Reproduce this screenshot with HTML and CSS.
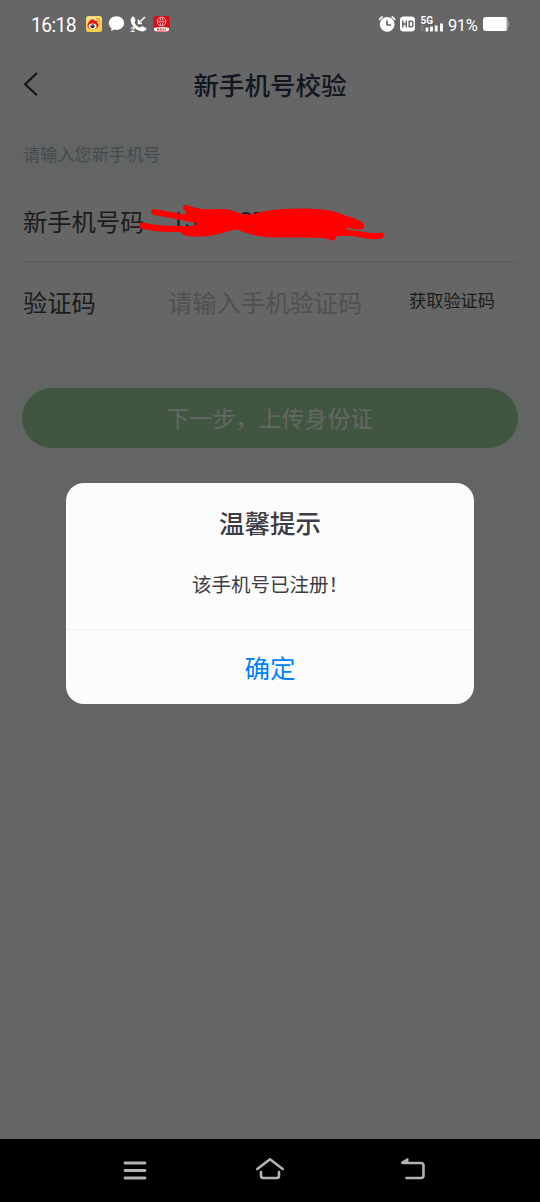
FILE: index.html
```html
<!DOCTYPE html>
<html lang="zh-CN">
<head>
<meta charset="utf-8">
<title>新手机号校验</title>
<link rel="stylesheet" href="styles.css">
</head>
<body>
<div class="screen">
  <div class="status">
    <span class="clock">16:18</span>
    <svg class="notices" width="86" height="20" viewBox="85 14 86 20">
      <rect x="86" y="16" width="16" height="16" rx="2.5" fill="#f8cf48"/>
      <rect x="86.500" y="16.500" width="15" height="7" rx="2" fill="#fbe08a"/>
      <path d="M87.500 26c0-4 4-7.500 6-6.500 1 0 1 1 .7 1.600 2-.7 3.600 0 2.900 1.800 1.700.4 2 2.500.8 4.100-2.300 3.200-10.400 3-10.400-1z" fill="#e51c12"/>
      <ellipse cx="92.600" cy="26.200" rx="3.900" ry="2.800" fill="#fff"/>
      <circle cx="92.500" cy="26.200" r="2" fill="#222"/>
      <circle cx="92" cy="25.600" r=".6" fill="#fff"/>
      <path d="M96 18.500q4-.5 4 4M96.500 20.500q1.700 0 1.800 1.800" fill="none" stroke="#f49a16" stroke-width="1.200"/>
      <path d="M116.500 16.300c4.300 0 7.600 2.900 7.600 6.800s-3.300 6.800-7.600 6.800c-.7 0-1.600-.1-2.200-.3l-3 1.500.1-2.800c-1.600-1.300-2.500-3.100-2.500-5.200 0-3.900 3.300-6.800 7.600-6.800z" fill="#fff"/>
      <path d="M132.300 16.800c1-.7 1.700-.4 2.100.6l1.100 2.600c.3.900-.7 1.500-1.100 2.300.8 2.500 2.900 4.400 5.400 5.200.9-.5 1.600-1.600 2.500-1.200l3.400 1.500c.9.500 1 1.200.3 1.900-1.500 1.800-3.600 2.100-6 1.300-4.700-1.500-8.400-5.500-9.200-10-.2-1.900.3-3.300 1.500-4.200z" fill="#fff"/>
      <path d="M138.300 23.500l6.700-6.500M138.500 19.500v4h3.500" fill="none" stroke="#fff" stroke-width="1.500"/>
      <text x="130.500" y="31.500" class="sim">2</text>
      <rect x="153.500" y="16" width="16" height="16" rx="3" fill="#d60c18"/>
      <path d="M154 28q3.500-1 7.500-1t7.500 1v1.500q0 2-2.500 2h-10q-2.500 0-2.500-2z" fill="#fff"/>
      <circle cx="161.500" cy="21.500" r="4.300" fill="none" stroke="#fbb" stroke-width="1"/>
      <path d="M160.500 18v2.200l-2 1.300 2 1.500v2.200M162.500 18v2.200l2 1.300-2 1.500v2.200M160.300 21.500h2.400" fill="none" stroke="#fbb" stroke-width=".8"/>
      <path d="M157 29.500h9" stroke="#e64650" stroke-width="2" stroke-dasharray="2 .7"/>
    </svg>
    <svg class="signals" width="68" height="20" viewBox="378 14 68 20">
      <circle cx="387.200" cy="24.300" r="7.400" fill="#fff"/>
      <path d="M379.300 20q1-2.200 3.400-3.500M395 20q-1-2.200-3.400-3.500" fill="none" stroke="#fff" stroke-width="1.600"/>
      <path d="M387 20.500v4.500h4" fill="none" stroke="#666" stroke-width="1.700"/>
      <rect x="400" y="16.500" width="15" height="15" rx="3.500" fill="#fff"/>
      <path d="M402.800 20.500v7M406.300 20.500v7M402.800 24h3.500M409.200 21.200h1.700q2 0 2 2v1.600q0 2-2 2h-1.700z" fill="none" stroke="#666" stroke-width="1.500"/>
      <text x="420.500" y="24" class="network">5G</text>
      <path d="M420.500 27.300l1.800-2.300 1.800 2.300zM420.500 28.700l1.800 2.300 1.800-2.300z" fill="#8c8c8c"/>
      <path d="M427 27.500v4M431.500 26.500v5M436.200 25.500v6M441.500 23.500v8" stroke="#fff" stroke-width="2.800"/>
    </svg>
    <span class="percent">91%</span>
    <svg width="28" height="14" viewBox="483 18 28 14">
      <path d="M507 21.500q2.500.5 2.500 3.500t-2.500 3.500z" fill="#999"/>
      <rect x="483" y="18" width="25" height="14" rx="3" fill="#999"/>
      <path d="M486 18h20.500v14H486q-3 0-3-3v-8q0-3 3-3z" fill="#fff"/>
    </svg>
  </div>

  <div class="header">
    <svg class="back" width="18" height="26" viewBox="22 71 18 26"><path d="M37 73L25.200 84.200l11.800 11" fill="none" stroke="#111620" stroke-width="2.200"/></svg>
    <h1 class="title">新手机号校验</h1>
  </div>

  <div class="hint">请输入您新手机号</div>

  <div class="form">
    <div class="row row-phone">
      <span class="label">新手机号码</span>
      <span class="phone"><span>13</span><span>87</span></span>
      <svg class="scribble" width="250" height="40" viewBox="138 203 250 40">
        <g fill="none" stroke="#f00" stroke-width="6" stroke-linecap="round" stroke-linejoin="round">
          <path d="M154 212q18 3 42 8M186 208q8 4 26 5M142 225.500q14 4 42 3.500M340 232.500q13 0 24 2.500 8 2 17 .5"/>
        </g>
        <path d="M190 206.500c10 4 22 2.500 33 2.500 9 0 17 5.500 24 5.500s16-4 28-4.800c15-1 28-1.700 39-.7 14 .3 23 3 31 6.500 8 2 14 4.500 18 7.500 2 3 1 6.500-3 6.500-5 0-8-1-13-2 0 1.500 0 2-1.500 2.500v5l-9.500 1.500c0 3-1 4.500-4 4-5-3-14-3-32-3h-26c-16-.5-27-4-37-8-9 1-18 5.500-29 6.500-11 1-20 1-25-1.500-4-3-3-4.500-1-6 4-2 9-2 14-4l3-3-14-7z" fill="#f00"/>
        <path d="M249 226q3-1 6 .2zM318 225.500q3-1 6 0z" fill="#a33"/>
      </svg>
    </div>
    <div class="row row-code">
      <span class="label">验证码</span>
      <span class="placeholder">请输入手机验证码</span>
      <span class="get-code">获取验证码</span>
    </div>
  </div>

  <div class="next">下一步，上传身份证</div>

  <div class="dialog">
    <div class="dialog-body">
      <h2 class="dialog-title">温馨提示</h2>
      <p class="message">该手机号已注册！</p>
    </div>
    <div class="confirm">确定</div>
  </div>

  <div class="navbar">
    <svg width="28" height="24" viewBox="121 1158 28 24"><path d="M125 1163h20M125 1170.500h20M125 1178h20" stroke="#b3b3b3" stroke-width="2.800" stroke-linecap="round"/></svg>
    <svg width="30" height="24" viewBox="255 1158 30 24"><path d="M257.300 1169l12.700-9.700 12.700 9.700M261 1172v3.800q0 2.200 2.200 2.200h13.600q2.200 0 2.200-2.200V1172" fill="none" stroke="#b3b3b3" stroke-width="2.600" stroke-linecap="round" stroke-linejoin="round"/></svg>
    <svg width="28" height="24" viewBox="399 1158 28 24"><path d="M403 1163h18q2.500 0 2.500 2.500v10q0 2.500-2.500 2.500H406.500" fill="none" stroke="#b3b3b3" stroke-width="2.600" stroke-linecap="round"/><path d="M401 1162l6.500-4 1 .8v5.200h-7z" fill="#b3b3b3"/></svg>
  </div>
</div>
</body>
</html>
```
FILE: styles.css
```css
* { box-sizing: border-box; }
body {
  margin: 0;
  font-family: "Noto Sans CJK SC", sans-serif;
}
h1, h2, p { margin: 0; }
svg { display: block; flex: none; }
.screen {
  position: relative;
  display: flex;
  flex-direction: column;
  width: 540px;
  height: 1202px;
  overflow: hidden;
  background: #626564;
}
.status {
  display: flex;
  align-items: center;
  height: 48px;
  padding: 0 29px 0 31px;
  background: #666;
  color: #fff;
}
.clock {
  width: 54px;
  font: 19.3px/24px Roboto, sans-serif;
  letter-spacing: -0.6px;
  padding-top: 3px;
}
.signals { margin-left: auto; }
.percent {
  width: 37px;
  padding: 4px 0 0 2px;
  font: 16.5px/20px Roboto, sans-serif;
  letter-spacing: -0.4px;
}
.sim { font: bold 8px Roboto, sans-serif; fill: #fff; }
.network { font: bold 10px Roboto, sans-serif; fill: #fff; }
.header {
  display: grid;
  grid-template-columns: 40px 1fr 40px;
  align-items: center;
  height: 72px;
  padding: 0 22px;
  background: #666;
}
.title {
  font-size: 25.5px;
  font-weight: 500;
  line-height: 38px;
  text-align: center;
  white-space: nowrap;
  color: #111620;
}
.hint {
  height: 61px;
  padding: 5px 23px 0;
  font-size: 17.2px;
  line-height: 58px;
  color: #474950;
}
.form {
  height: 161px;
  padding: 0 22px;
  background: #666;
}
.row {
  position: relative;
  display: flex;
  align-items: center;
  color: #1b1b1b;
}
.row-phone {
  height: 82px;
  padding-bottom: 2px;
  border-bottom: 2px solid #5f6061;
}
.row-code {
  height: 79px;
  padding-bottom: 2px;
}
.label {
  width: 146px;
  padding-left: 1px;
  font-size: 24.3px;
  white-space: nowrap;
}
.phone {
  display: flex;
  gap: 41px;
  padding: 2px 0 0 3px;
  font: 24.3px/32px Roboto, sans-serif;
}
.scribble {
  position: absolute;
  left: 116px;
  top: 22px;
}
.placeholder {
  width: 241px;
  font-size: 24.3px;
  color: #505050;
}
.get-code {
  font-size: 17.2px;
  margin-top: -4px;
}
.next {
  height: 60px;
  margin: 46px 22px 0;
  border-radius: 30px;
  background: #405640;
  color: #666;
  font-size: 23px;
  line-height: 59px;
  text-align: center;
}
.dialog {
  position: absolute;
  left: 66px;
  top: 483px;
  width: 408px;
  height: 221px;
  border-radius: 18px;
  background: #fcfcfc;
  color: #3e3d45;
  text-align: center;
}
.dialog-body {
  height: 147px;
  padding-top: 20px;
  border-bottom: 1px solid #f0f0f0;
}
.dialog-title {
  font-size: 25.5px;
  font-weight: 500;
  line-height: 38px;
}
.message {
  margin-top: 28px;
  font-size: 19.5px;
  line-height: 29px;
}
.confirm {
  color: #0082fe;
  font-size: 25.5px;
  line-height: 74px;
}
.navbar {
  display: grid;
  grid-template-columns: 134px 144px 28px;
  height: 63px;
  margin-top: auto;
  padding: 19px 113px 0 121px;
  background: #000;
}
```
